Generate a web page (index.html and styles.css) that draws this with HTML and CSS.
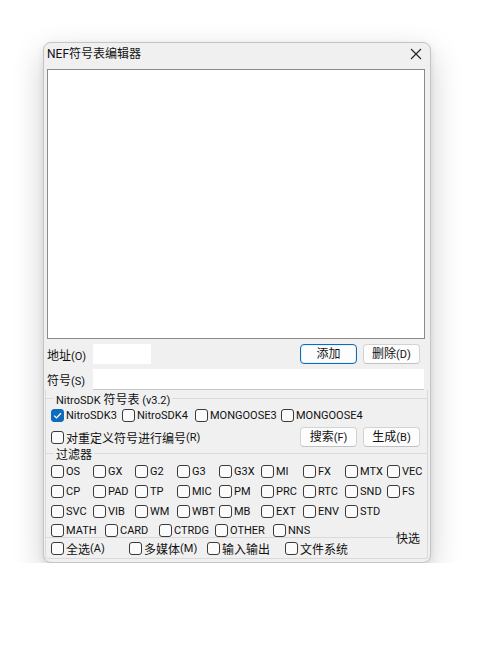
FILE: index.html
```html
<!DOCTYPE html>
<html lang="zh-CN">
	<head>
		<meta charset="UTF-8" />
		<meta name="viewport" content="width=device-width, initial-scale=1.0" />
		<title>NEF符号表编辑器</title>
		<link rel="stylesheet" href="styles.css">
	</head>
	<body>
		<div class="window">
			<div class="titlebar">
				<span class="title">NEF<span class="zh">符号表编辑器</span></span>
				<svg class="close" width="12" height="12" viewBox="0 0 12 12">
					<path d="M1 1L11 11M11 1L1 11" stroke="#222" stroke-width="1.1" fill="none" />
				</svg>
			</div>
			<div class="content">
				<div class="listbox"></div>

				<div class="row row-addr">
					<span class="field-label"><span class="zh">地址</span>(O)</span>
					<span class="input addr"></span>
					<span class="spacer"></span>
					<button class="btn default"><span class="zh">添加</span></button>
					<button class="btn"><span class="zh">删除</span>(D)</button>
				</div>

				<div class="row row-sym">
					<span class="field-label"><span class="zh">符号</span>(S)</span>
					<span class="input sym"></span>
				</div>

				<div class="group">
					<div class="group-title"><span>NitroSDK <span class="zh">符号表</span> (v3.2)</span></div>
					<div class="sdk-row">
						<label class="check"><span class="box checked"><svg width="11" height="11" viewBox="0 0 11 11"><path d="M2.2 5.6L4.5 7.9L8.9 3.2" stroke="#fff" stroke-width="1.3" fill="none" /></svg></span>NitroSDK3</label>
						<label class="check"><span class="box"></span>NitroSDK4</label>
						<label class="check"><span class="box"></span>MONGOOSE3</label>
						<label class="check"><span class="box"></span>MONGOOSE4</label>
					</div>
					<div class="row-renum">
						<label class="check"><span class="box"></span><span class="zh">对重定义符号进行编号</span>(R)</label>
						<span class="spacer"></span>
						<button class="btn"><span class="zh">搜索</span>(F)</button>
						<button class="btn"><span class="zh">生成</span>(B)</button>
					</div>

					<div class="group-title"><span class="zh">过滤器</span></div>
					<div class="filter-grid">
						<label class="check"><span class="box"></span>OS</label>
						<label class="check"><span class="box"></span>GX</label>
						<label class="check"><span class="box"></span>G2</label>
						<label class="check"><span class="box"></span>G3</label>
						<label class="check"><span class="box"></span>G3X</label>
						<label class="check"><span class="box"></span>MI</label>
						<label class="check"><span class="box"></span>FX</label>
						<label class="check"><span class="box"></span>MTX</label>
						<label class="check"><span class="box"></span>VEC</label>

						<label class="check"><span class="box"></span>CP</label>
						<label class="check"><span class="box"></span>PAD</label>
						<label class="check"><span class="box"></span>TP</label>
						<label class="check"><span class="box"></span>MIC</label>
						<label class="check"><span class="box"></span>PM</label>
						<label class="check"><span class="box"></span>PRC</label>
						<label class="check"><span class="box"></span>RTC</label>
						<label class="check"><span class="box"></span>SND</label>
						<label class="check"><span class="box"></span>FS</label>

						<label class="check"><span class="box"></span>SVC</label>
						<label class="check"><span class="box"></span>VIB</label>
						<label class="check"><span class="box"></span>WM</label>
						<label class="check"><span class="box"></span>WBT</label>
						<label class="check"><span class="box"></span>MB</label>
						<label class="check"><span class="box"></span>EXT</label>
						<label class="check"><span class="box"></span>ENV</label>
						<label class="check"><span class="box"></span>STD</label>
					</div>
					<div class="filter-last">
						<label class="check"><span class="box"></span>MATH</label>
						<label class="check"><span class="box"></span>CARD</label>
						<label class="check"><span class="box"></span>CTRDG</label>
						<label class="check"><span class="box"></span>OTHER</label>
						<label class="check"><span class="box"></span>NNS</label>
					</div>

					<div class="group-title quick"><span class="zh">快选</span></div>
					<div class="quick-row">
						<label class="check"><span class="box"></span><span class="zh">全选</span>(A)</label>
						<label class="check"><span class="box"></span><span class="zh">多媒体</span>(M)</label>
						<label class="check"><span class="box"></span><span class="zh">输入输出</span></label>
						<label class="check"><span class="box"></span><span class="zh">文件系统</span></label>
					</div>
				</div>
			</div>
		</div>
	</body>
</html>
```

FILE: styles.css
```css
body {
	margin: 0;
	background: #fff;
	font: 11px Roboto, "Noto Sans CJK SC", sans-serif;
	color: #111;
}
.zh {
	font-family: "Noto Sans CJK SC", sans-serif;
	font-size: 12px;
}
.window {
	margin: 42px 0 0 43px;
	width: 388px;
	height: 521px;
	box-sizing: border-box;
	border: 1px solid #c4c4c4;
	border-radius: 8px;
	background: #f0f0f0;
	box-shadow: 0 12px 32px rgba(0, 0, 0, 0.2), 0 2px 6px rgba(0, 0, 0, 0.08);
	display: flex;
	flex-direction: column;
	overflow: hidden;
}
.titlebar {
	height: 27px;
	box-sizing: border-box;
	padding: 2px 8px 0 3px;
	display: flex;
	align-items: flex-start;
}
.title {
	line-height: 16px;
	font-size: 12px;
	flex: 1;
}
.close {
	margin-top: 3px;
}
.content {
	flex: 1;
	display: flex;
	flex-direction: column;
	padding: 0 5px 0 3px;
}
.listbox {
	height: 270px;
	box-sizing: border-box;
	border: 1px solid #8a8a8a;
	background: #fff;
}
.row {
	display: flex;
	align-items: center;
}
.row-addr {
	margin-top: 5px;
	height: 20px;
}
.row-sym {
	margin-top: 5px;
	height: 21px;
}
.field-label {
	width: 46px;
}
.input {
	display: block;
	background: #fff;
	box-sizing: border-box;
}
.addr {
	width: 58px;
	height: 20px;
}
.sym {
	flex: 1;
	height: 21px;
	margin-right: 1px;
	border-bottom: 1px solid #c6c6c6;
}
.spacer {
	flex: 1;
}
.btn {
	width: 57px;
	height: 20px;
	box-sizing: border-box;
	margin: 0 0 0 6px;
	padding: 0;
	border: 1px solid #d3d3d3;
	border-bottom-color: #c2c2c2;
	border-radius: 4px;
	background: #fdfdfd;
	font: inherit;
	color: #111;
	line-height: 16px;
}
.row-addr .btn:last-child {
	margin-right: 5px;
}
.btn.default {
	border-color: #0f6cbd;
	box-shadow: inset 0 0 0 1px #e6f0fa;
}
.group {
	flex: 1;
	margin: 0 -3px 3px -2px;
	padding-left: 5px;
	border-left: 1px solid #dadada;
	border-right: 1px solid #dadada;
	border-bottom: 1px solid #dadada;
	border-radius: 0 0 3px 3px;
	display: flex;
	flex-direction: column;
}
.group-title {
	display: flex;
	align-items: center;
	height: 12px;
	margin-left: -5px;
}
.group-title::before,
.group-title::after {
	content: "";
	height: 1px;
	background: #dadada;
}
.group-title::before {
	width: 8px;
}
.group-title::after {
	flex: 1;
}
.group-title > span {
	padding: 0 2px;
}
.group-title:first-child {
	margin-top: 2px;
}
.group-title.quick {
	height: 14px;
	margin-top: -10px;
}
.group-title.quick::before {
	flex: 1;
	width: auto;
}
.group-title.quick::after {
	flex: 0 0 5px;
	background: none;
}
.check {
	display: flex;
	align-items: center;
	white-space: nowrap;
}
.box {
	width: 13px;
	height: 13px;
	box-sizing: border-box;
	margin-right: 2px;
	border: 1px solid #3a3a3a;
	border-radius: 3px;
	background: #fbfbfb;
	display: flex;
	align-items: center;
	justify-content: center;
	flex: none;
}
.box.checked {
	background: #0f6cbd;
	border-color: #0f6cbd;
}
.sdk-row {
	height: 18px;
	margin-top: 2px;
	display: grid;
	grid-template-columns: 71px 73px 86px auto;
	align-items: center;
}
.row-renum {
	display: flex;
	align-items: center;
	height: 20px;
	margin: 3px 7px 0 0;
}
.filter-grid {
	margin-top: 2px;
	display: grid;
	grid-template-columns: repeat(9, 42px);
	grid-auto-rows: 20px;
	align-items: center;
}
.filter-last {
	height: 19px;
	display: grid;
	grid-template-columns: 54px 54px 56px 58px auto;
	align-items: center;
}
.quick-row {
	margin-top: -6px;
	height: 20px;
	display: grid;
	grid-template-columns: repeat(4, 78px);
	align-items: center;
}
```
